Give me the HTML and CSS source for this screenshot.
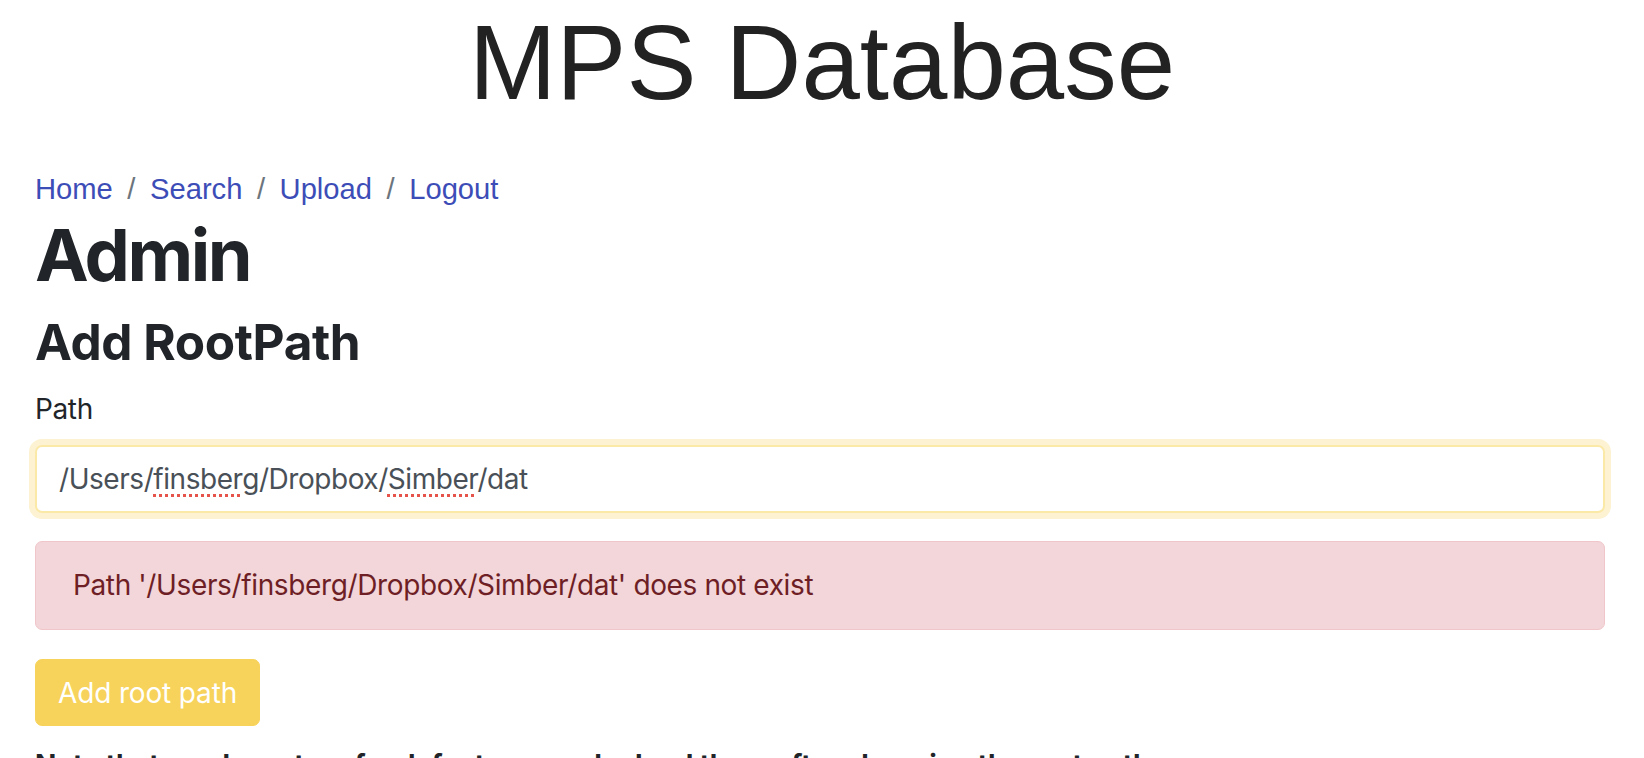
FILE: index.html
```html
<!DOCTYPE html>
<html lang="en">
<head>
<meta charset="utf-8">
<title>MPS Database</title>
<link rel="stylesheet" href="styles.css">
</head>
<body>
<header class="site-header">
  <div class="site-title">MPS Database</div>
</header>
<main class="page">
  <nav class="crumbs">
    <ol class="crumb-list">
      <li class="crumb"><a class="crumb-link" href="#">Home</a></li>
      <li class="crumb"><a class="crumb-link" href="#">Search</a></li>
      <li class="crumb"><a class="crumb-link" href="#">Upload</a></li>
      <li class="crumb"><a class="crumb-link" href="#">Logout</a></li>
    </ol>
  </nav>
  <h1 class="heading-main">Admin</h1>
  <h3 class="heading-sub">Add RootPath</h3>
  <form class="root-form">
    <div class="form-group">
      <label class="field-label" for="path">Path</label>
      <div class="field-input"><span class="field-text">/Users/<span class="misspelled">finsberg</span>/Dropbox/<span class="misspelled">Simber</span>/dat</span></div>
    </div>
    <div class="alert-danger">Path '/Users/finsberg/Dropbox/Simber/dat' does not exist</div>
    <button class="btn-warning" type="button">Add root path</button>
  </form>
  <p class="note"><b>Note that you have to refresh features and reload them after changing the root path</b></p>
</main>
</body>
</html>
```

FILE: styles.css
```css
html, body {
  margin: 0;
  padding: 0;
  background: #ffffff;
  overflow: hidden;
}

body {
  font-family: Inter, "Liberation Sans", sans-serif;
  color: #212529;
  font-size: 28px;
  line-height: 1.5;
  letter-spacing: -0.37px;
}

.site-header {
  display: flex;
  justify-content: center;
}

.site-title {
  font-family: "Liberation Sans", Arial, sans-serif;
  font-weight: 400;
  font-size: 105px;
  line-height: 126px;
  letter-spacing: 0;
  color: #222222;
}

.page {
  padding: 0 39px 0 35px;
}

.crumbs {
  margin: 42px 0 2px;
}

.crumb-list {
  display: flex;
  list-style: none;
  margin: 0;
  padding: 0;
  font-family: "Liberation Sans", Arial, sans-serif;
  font-size: 29.2px;
  line-height: 42px;
  letter-spacing: 0;
}

.crumb + .crumb {
  padding-left: 14.5px;
}

.crumb + .crumb::before {
  content: "/";
  display: inline-block;
  padding-right: 14.5px;
  color: #6c757d;
}

.crumb-link {
  color: #3d4db7;
  text-decoration: none;
}

.heading-main {
  margin: 0 0 15px;
  font-size: 72px;
  font-weight: 700;
  line-height: 1.2;
  letter-spacing: -2.5px;
  color: #212529;
}

.heading-sub {
  margin: 0 0 15px;
  font-size: 49.5px;
  font-weight: 700;
  line-height: 1.2;
  letter-spacing: -0.4px;
  color: #212529;
}

.root-form {
  margin: 0;
}

.form-group {
  margin-bottom: 28.5px;
}

.field-label {
  display: block;
  margin-bottom: 15px;
  font-size: 28px;
  line-height: 42px;
}

.field-input {
  box-sizing: border-box;
  height: 68px;
  display: flex;
  align-items: center;
  padding: 0 22px;
  border: 2px solid #fbe9a8;
  border-radius: 7px;
  box-shadow: 0 0 0 6px #fdf3d2;
  background: #ffffff;
  font-size: 28px;
  letter-spacing: -0.45px;
  color: #495057;
}

.misspelled {
  text-decoration: underline dotted #e5534b;
  text-decoration-thickness: 3px;
  text-underline-offset: 5px;
}

.alert-danger {
  box-sizing: border-box;
  height: 89px;
  padding: 22px 37px;
  margin-bottom: 29px;
  border: 1px solid #f0c6ca;
  border-radius: 7px;
  background: #f3d6d9;
  color: #6e1e25;
  font-size: 28px;
  line-height: 42px;
}

.btn-warning {
  box-sizing: border-box;
  display: block;
  height: 67px;
  padding: 0 22px;
  border: 1px solid #f7d35b;
  border-radius: 7px;
  background: #f7d35b;
  color: #ffffff;
  font-family: Inter, "Liberation Sans", sans-serif;
  font-size: 28px;
  line-height: 42px;
  letter-spacing: -0.15px;
}

.note {
  margin: 18px 0 0;
  font-size: 28px;
  line-height: 42px;
  letter-spacing: -0.2px;
}
```
